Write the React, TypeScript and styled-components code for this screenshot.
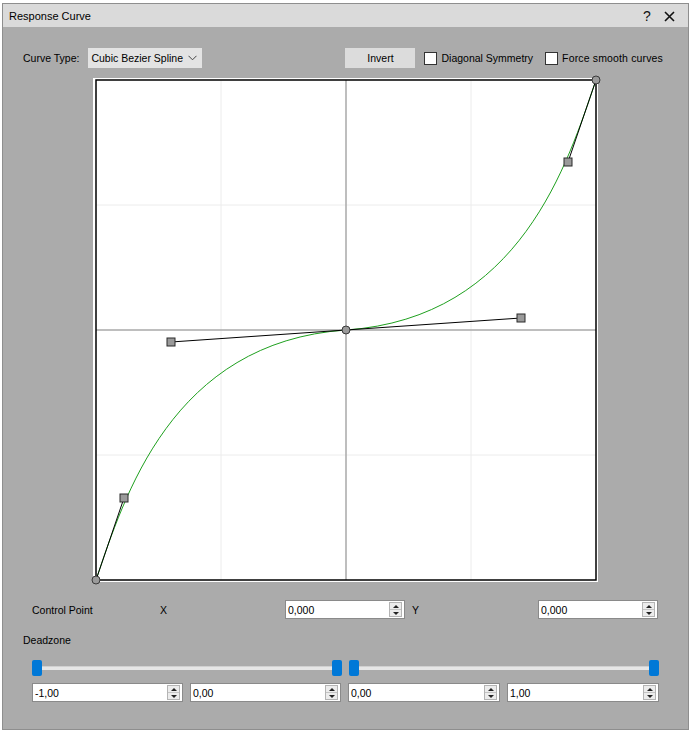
import React from "react";
import styled, { createGlobalStyle } from "styled-components";

const GlobalStyle = createGlobalStyle`
  html, body {
    margin: 0;
    padding: 0;
    background: #ffffff;
  }
  body {
    font-family: "Liberation Sans", Arial, sans-serif;
    font-size: 10.5px;
    color: #000;
  }
`;

const Frame = styled.div`
  box-sizing: border-box;
  margin: 3px 0 0 2px;
  width: 687px;
  height: 727px;
  border: 1px solid #8e8e8e;
  background: #ababab;
  display: flex;
  flex-direction: column;
`;

const TitleBar = styled.div`
  height: 23px;
  background: #dadada;
  display: flex;
  align-items: center;
  padding: 1px 8px 0 6px;
  box-sizing: border-box;
  font-size: 11px;
`;

const TitleText = styled.span`
  flex: 1;
`;

const TitleButton = styled.span`
  width: 22px;
  display: flex;
  justify-content: center;
  align-items: center;
  font-size: 14px;
  color: #111;
`;

const TopRow = styled.div`
  display: flex;
  align-items: center;
  height: 20px;
  margin-top: 21px;
  padding: 0 25px 0 20px;
`;

const Label = styled.span`
  white-space: nowrap;
`;

const Combo = styled.div`
  margin-left: 9px;
  width: 114px;
  height: 20px;
  box-sizing: border-box;
  background: #e3e3e3;
  display: flex;
  align-items: center;
  justify-content: space-between;
  padding: 0 5px 0 3px;
`;

const RightGroup = styled.div`
  margin-left: auto;
  display: flex;
  align-items: center;
`;

const PushButton = styled.div`
  width: 70px;
  height: 20px;
  background: #dcdcdc;
  display: flex;
  align-items: center;
  justify-content: center;
  margin-right: 9px;
`;

const Check = styled.label`
  display: flex;
  align-items: center;
  gap: 4px;
  & + & {
    margin-left: 12px;
  }
`;

const Box = styled.span`
  width: 13px;
  height: 13px;
  box-sizing: border-box;
  background: #fff;
  border: 1px solid #333;
`;

const CheckText = styled.span<{ $spread?: boolean }>`
  ${(p) => (p.$spread ? "letter-spacing: 0.15px;" : "")}
`;

const PlotWrap = styled.div`
  align-self: center;
  margin-top: 10px;
  width: 505px;
  height: 504px;
  background: #fff;
  & > svg {
    overflow: visible;
    display: block;
  }
`;

const ControlRow = styled.div`
  display: grid;
  grid-template-columns: 128px 125px 120px 7px 126px 120px;
  align-items: center;
  margin-top: 18px;
  padding-left: 29px;
  height: 19px;
`;

const SectionLabel = styled.div`
  margin-top: 14px;
  padding-left: 20px;
  height: 14px;
  line-height: 14px;
`;

const SliderRow = styled.div`
  display: grid;
  grid-template-columns: 310px 310px;
  gap: 7px;
  padding-left: 29px;
  margin-top: 13px;
`;

const Slider = styled.div`
  position: relative;
  height: 16px;
`;

const Track = styled.div`
  position: absolute;
  left: 4px;
  right: 4px;
  top: 6px;
  height: 4px;
  background: #e6e6e6;
  border-top: 1px solid #d0d0d0;
  box-sizing: border-box;
`;

const Handle = styled.div<{ $side: "left" | "right" }>`
  position: absolute;
  top: 0;
  ${(p) => (p.$side === "left" ? "left: 0;" : "right: 0;")}
  width: 10px;
  height: 16px;
  border-radius: 2px;
  background: #0078d7;
`;

const SpinRow = styled.div`
  display: grid;
  grid-template-columns: 151px 151px 152px 152px;
  gap: 7px;
  padding-left: 29px;
  margin-top: 7px;
`;

const SpinBox = styled.div`
  box-sizing: border-box;
  height: 19px;
  background: #fff;
  border: 1px solid #8a8a8a;
  display: flex;
  align-items: center;
  padding-left: 2px;
`;

const SpinValue = styled.span`
  flex: 1;
`;

const Arrows = styled.div`
  box-sizing: border-box;
  width: 13px;
  height: 15px;
  margin-right: 2px;
  border: 1px solid #b4b4b4;
  background: #ececec;
  display: flex;
  flex-direction: column;
`;

const Arrow = styled.div<{ $down?: boolean }>`
  flex: 1;
  display: flex;
  align-items: center;
  justify-content: center;
  ${(p) => (p.$down ? "border-top: 1px solid #c4c4c4;" : "")}
  &::before {
    content: "";
    border-left: 3px solid transparent;
    border-right: 3px solid transparent;
    ${(p) =>
      p.$down ? "border-top: 3px solid #222;" : "border-bottom: 3px solid #222;"}
  }
`;

const Spin: React.FC<{ value: string }> = ({ value }) => (
  <SpinBox>
    <SpinValue>{value}</SpinValue>
    <Arrows>
      <Arrow />
      <Arrow $down />
    </Arrows>
  </SpinBox>
);

// plot coords: center of the 500px square inside the white box
const CX = 253;
const CY = 252;
const S = 250;
const px = (x: number) => CX + x * S;
const py = (y: number) => CY - y * S;

const pts = {
  start: [-1, -1],
  h1: [-0.888, -0.672],
  h2: [-0.7, -0.048],
  mid: [0, 0],
  h3: [0.7, 0.048],
  h4: [0.888, 0.672],
  end: [1, 1],
};

type Key = keyof typeof pts;
const P = (k: Key) => `${px(pts[k][0])},${py(pts[k][1])}`;

const Plot: React.FC = () => {
  const grid = [-0.5, 0.5];
  const handles: Key[] = ["h1", "h2", "h3", "h4"];
  const knots: Key[] = ["start", "mid", "end"];
  return (
    <svg width="505" height="504" viewBox="0 0 505 504">
      {grid.map((g) => (
        <g key={g} stroke="#ececec" strokeWidth="1">
          <line x1={px(g)} y1={py(1)} x2={px(g)} y2={py(-1)} />
          <line x1={px(-1)} y1={py(g)} x2={px(1)} y2={py(g)} />
        </g>
      ))}
      <g stroke="#a9a9a9" strokeWidth="1.5">
        <line x1={px(0)} y1={py(1)} x2={px(0)} y2={py(-1)} />
        <line x1={px(-1)} y1={py(0)} x2={px(1)} y2={py(0)} />
      </g>
      <rect x={px(-1)} y={py(1)} width={500} height={500} fill="none" stroke="#000" strokeWidth="1.5" />
      <path
        d={`M${P("start")} C${P("h1")} ${P("h2")} ${P("mid")} C${P("h3")} ${P("h4")} ${P("end")}`}
        fill="none"
        stroke="#1ea01e"
        strokeWidth="1"
      />
      <g stroke="#000" strokeWidth="1">
        <line x1={px(-1)} y1={py(-1)} x2={px(pts.h1[0])} y2={py(pts.h1[1])} />
        <line x1={px(pts.h2[0])} y1={py(pts.h2[1])} x2={px(pts.h3[0])} y2={py(pts.h3[1])} />
        <line x1={px(1)} y1={py(1)} x2={px(pts.h4[0])} y2={py(pts.h4[1])} />
      </g>
      {handles.map((k) => (
        <rect
          key={k}
          x={px(pts[k][0]) - 4}
          y={py(pts[k][1]) - 4}
          width="8"
          height="8"
          fill="#9a9a9a"
          stroke="#2a2a2a"
          strokeWidth="1"
        />
      ))}
      {knots.map((k) => (
        <circle
          key={k}
          cx={px(pts[k][0])}
          cy={py(pts[k][1])}
          r="4"
          fill="#9a9a9a"
          stroke="#3a3a3a"
          strokeWidth="1"
        />
      ))}
    </svg>
  );
};

const App: React.FC = () => {
  return (
    <>
      <GlobalStyle />
      <Frame>
        <TitleBar>
          <TitleText>Response Curve</TitleText>
          <TitleButton>?</TitleButton>
          <TitleButton>
            <svg width="11" height="11" viewBox="0 0 11 11">
              <path d="M1 1 L10 10 M10 1 L1 10" stroke="#111" strokeWidth="1.6" />
            </svg>
          </TitleButton>
        </TitleBar>

        <TopRow>
          <Label>Curve Type:</Label>
          <Combo>
            <span>Cubic Bezier Spline</span>
            <svg width="9" height="6" viewBox="0 0 9 6">
              <path d="M0.5 0.8 L4.5 4.8 L8.5 0.8" fill="none" stroke="#444" strokeWidth="1" />
            </svg>
          </Combo>
          <RightGroup>
            <PushButton>Invert</PushButton>
            <Check>
              <Box />
              <CheckText>Diagonal Symmetry</CheckText>
            </Check>
            <Check>
              <Box />
              <CheckText $spread>Force smooth curves</CheckText>
            </Check>
          </RightGroup>
        </TopRow>

        <PlotWrap>
          <Plot />
        </PlotWrap>

        <ControlRow>
          <Label>Control Point</Label>
          <Label>X</Label>
          <Spin value="0,000" />
          <span />
          <Label>Y</Label>
          <Spin value="0,000" />
        </ControlRow>

        <SectionLabel>Deadzone</SectionLabel>

        <SliderRow>
          <Slider>
            <Track />
            <Handle $side="left" />
            <Handle $side="right" />
          </Slider>
          <Slider>
            <Track />
            <Handle $side="left" />
            <Handle $side="right" />
          </Slider>
        </SliderRow>

        <SpinRow>
          <Spin value="-1,00" />
          <Spin value="0,00" />
          <Spin value="0,00" />
          <Spin value="1,00" />
        </SpinRow>
      </Frame>
    </>
  );
};

export default App;
